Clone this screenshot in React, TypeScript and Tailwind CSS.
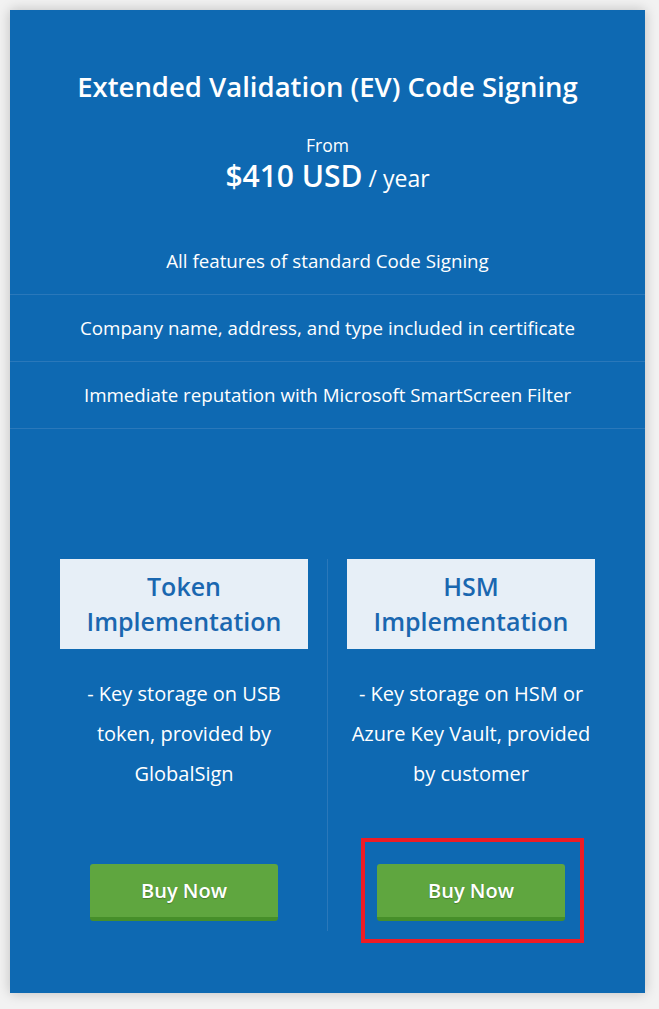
import React from "react";

const features = [
  "All features of standard Code Signing",
  "Company name, address, and type included in certificate",
  "Immediate reputation with Microsoft SmartScreen Filter",
];

function Column({
  title,
  lines,
  highlighted,
  bordered,
}: {
  title: string[];
  lines: string[];
  highlighted?: boolean;
  bordered?: boolean;
}) {
  return (
    <div
      className={`flex flex-1 flex-col items-center px-[19px] pb-[10px] ${
        bordered ? "border-l border-[#2a78ba]" : ""
      }`}
    >
      <div className="flex h-[90px] w-full flex-col items-center justify-center bg-[#e7eff7] text-[25px] font-semibold leading-[35px] text-[#1a67b0]">
        {title.map((t) => (
          <div key={t}>{t}</div>
        ))}
      </div>
      <div className="mt-[25px] text-center text-[20px] leading-[40px] text-white">
        {lines.map((l) => (
          <div key={l}>{l}</div>
        ))}
      </div>
      <div className="relative mt-[70px]">
        <button className="flex h-[57px] w-[188px] items-center justify-center rounded-[3px] border-b-[4px] border-[#468f2a] bg-[#5fa63f] text-[20px] font-semibold text-white [text-shadow:0_1px_1px_rgba(0,0,0,0.25)]">
          Buy Now
        </button>
        {highlighted && (
          <span className="pointer-events-none absolute -top-[26px] -right-[19px] -bottom-[22px] -left-[16px] border-[4px] border-[#ee1c25]" />
        )}
      </div>
    </div>
  );
}

export default function App() {
  return (
    <div
      className="min-h-[1009px] w-[659px] bg-[#f2f2f2] pt-[10px] pl-[10px]"
      style={{ fontFamily: '"Open Sans", "Noto Sans", sans-serif' }}
    >
      <div className="w-[635px] bg-[#0e69b2] pb-[62px] shadow-[0_0_12px_rgba(0,0,0,0.22)]">
        <div className="pt-[59px] text-center text-[27.5px] font-semibold leading-[36px] text-white">
          Extended Validation (EV) Code Signing
        </div>
        <div className="mt-[29px] text-center text-[17.5px] leading-[22px] text-white">
          From
        </div>
        <div className="mt-[3px] text-center leading-[34px] text-white">
          <span className="text-[30px] font-semibold">$410 USD</span>
          <span className="text-[23px]"> / year</span>
        </div>
        <div className="mt-[30px]">
          {features.map((f) => (
            <div
              key={f}
              className="flex h-[67px] items-center justify-center border-b border-[#2a78ba] text-[18.75px] text-white"
            >
              {f}
            </div>
          ))}
        </div>
        <div className="mt-[130px] flex px-[31px]">
          <Column
            title={["Token", "Implementation"]}
            lines={["- Key storage on USB", "token, provided by", "GlobalSign"]}
          />
          <Column
            bordered
            highlighted
            title={["HSM", "Implementation"]}
            lines={[
              "- Key storage on HSM or",
              "Azure Key Vault, provided",
              "by customer",
            ]}
          />
        </div>
      </div>
    </div>
  );
}
